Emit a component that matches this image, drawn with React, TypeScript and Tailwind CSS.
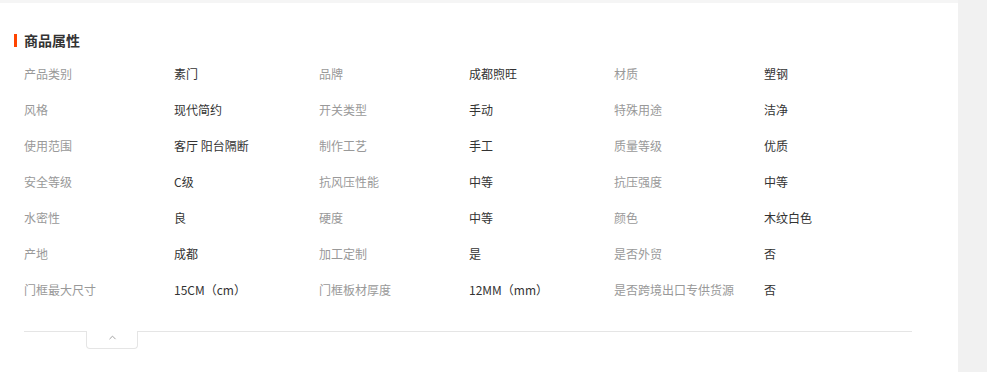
import { ChevronUp } from "lucide-react"

const rows: [string, string][][] = [
    [["产品类别", "素门"], ["品牌", "成都煦旺"], ["材质", "塑钢"]],
    [["风格", "现代简约"], ["开关类型", "手动"], ["特殊用途", "洁净"]],
    [["使用范围", "客厅 阳台隔断"], ["制作工艺", "手工"], ["质量等级", "优质"]],
    [["安全等级", "C级"], ["抗风压性能", "中等"], ["抗压强度", "中等"]],
    [["水密性", "良"], ["硬度", "中等"], ["颜色", "木纹白色"]],
    [["产地", "成都"], ["加工定制", "是"], ["是否外贸", "否"]],
    [["门框最大尺寸", "15CM（cm）"], ["门框板材厚度", "12MM（mm）"], ["是否跨境出口专供货源", "否"]],
]

export default function App() {
    return (
        <div
            className="w-[987px] h-[372px] bg-[#f1f1f1] flex flex-col overflow-hidden"
            style={{ fontFamily: '"Microsoft YaHei", "Noto Sans CJK SC", "Liberation Sans", sans-serif' }}
        >
            <div className="h-[3px] w-[958px] bg-[#f5f5f5]" />
            <div className="w-[958px] flex-1 bg-white pt-[27px]">
                {/* Section title */}
                <div className="flex items-center h-[20px] pl-[14px]">
                    <span className="w-[3px] h-[13px] bg-[#ff4400]" />
                    <span className="ml-[7px] text-[14px] font-bold text-[#333]">商品属性</span>
                </div>

                {/* Attribute grid */}
                <div className="pl-[24px] pt-[6px] w-[912px]">
                    {rows.map((row, i) => (
                        <div key={i} className="flex h-[36px] items-center text-[12px]">
                            {row.map(([label, value], j) => (
                                <div key={j} className="flex w-[295px]">
                                    <span className="w-[150px] text-[#999]">{label}</span>
                                    <span className="text-[#333]">{value}</span>
                                </div>
                            ))}
                        </div>
                    ))}
                </div>

                {/* Collapse bar */}
                <div className="ml-[24px] mt-[23px] w-[888px] flex items-start">
                    <div className="w-[62px] border-t border-[#e5e5e5]" />
                    <div className="w-[52px] h-[18px] border border-t-0 border-[#e5e5e5] rounded-b-[4px] flex items-center justify-center">
                        <ChevronUp className="w-[11px] h-[11px] text-[#999] -mt-[4px]" strokeWidth={2} />
                    </div>
                    <div className="flex-1 border-t border-[#e5e5e5]" />
                </div>
            </div>
        </div>
    )
}
